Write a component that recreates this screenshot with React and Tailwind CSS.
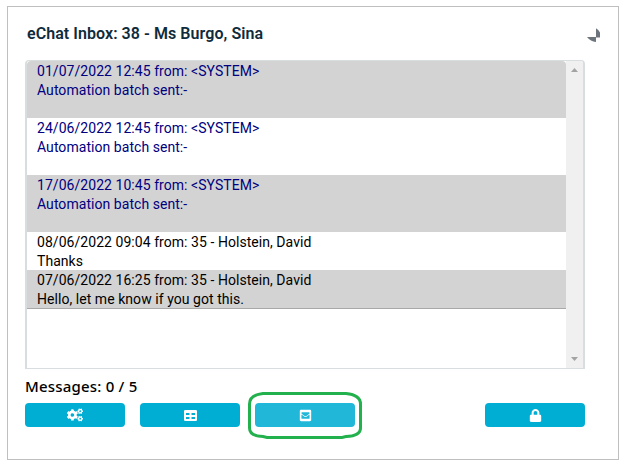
import { FaCogs, FaEnvelopeSquare, FaLock } from "react-icons/fa";

const messages = [
    { id: 1, date: "01/07/2022 12:45", from: "<SYSTEM>", body: "Automation batch sent:-", system: true },
    { id: 2, date: "24/06/2022 12:45", from: "<SYSTEM>", body: "Automation batch sent:-", system: true },
    { id: 3, date: "17/06/2022 10:45", from: "<SYSTEM>", body: "Automation batch sent:-", system: true },
    { id: 4, date: "08/06/2022 09:04", from: "35 - Holstein, David", body: "Thanks" },
    { id: 5, date: "07/06/2022 16:25", from: "35 - Holstein, David", body: "Hello, let me know if you got this." },
];

function Message({ message }) {
    return (
        <li
            className={`pt-px pl-2.5 text-[14px] leading-[19px] tracking-[0.05px] odd:bg-[#d3d3d3] ${
                message.system ? "h-[57px] text-[#000080]" : "h-[38px] text-black"
            }`}
        >
            <p>
                {message.date} from: {message.from}
            </p>
            <p>{message.body}</p>
        </li>
    );
}

function Scrollbar() {
    return (
        <div className="flex w-[17px] flex-col items-center justify-between bg-[#f0f0f0] py-[7px]">
            <svg className="h-1 w-[7px]" viewBox="0 0 7 4" fill="#a3a3a3">
                <path d="M3.5 0L7 4H0z" />
            </svg>
            <svg className="h-1 w-[7px]" viewBox="0 0 7 4" fill="#a3a3a3">
                <path d="M0 0h7L3.5 4z" />
            </svg>
        </div>
    );
}

function TableIcon() {
    return (
        <svg className="h-[11px] w-[13px]" viewBox="0 0 13 11" fill="currentColor" fillRule="evenodd">
            <path d="M1.2 0H11.8Q13 0 13 1.2V9.8Q13 11 11.8 11H1.2Q0 11 0 9.8V1.2Q0 0 1.2 0ZM2 3V5H5.5V3ZM7.5 3V5H11V3ZM2 7V9H5.5V7ZM7.5 7V9H11V7Z" />
        </svg>
    );
}

function ActionButton({ label, className = "bg-[#00aed4]", children }) {
    return (
        <button
            type="button"
            aria-label={label}
            className={`flex h-6 w-[100px] items-center justify-center rounded text-white ${className}`}
        >
            {children}
        </button>
    );
}

function App() {
    return (
        <div className="h-[467px] w-[623px] bg-white pt-1.5 pl-[7px] font-['Roboto',sans-serif]">
            <section className="h-[454px] w-[612px] border border-[#bfbfbf] pl-[17px]">
                <header className="flex h-[53px] w-[576px] items-start justify-between pl-0.5">
                    <h1 className="mt-[15px] text-[16px] leading-6 font-semibold tracking-[0.06px] text-[#0f2b3c]">
                        eChat Inbox: 38 - Ms Burgo, Sina
                    </h1>
                    <svg className="mt-[21px] mr-px h-[14px] w-[13px]" viewBox="0 0 13 14" fill="#6c757d">
                        <path d="M9 0.3Q11.5 1.5 13 4.5V9.5H9zM0 9H9V14Q3.5 13.5 0 9z" />
                    </svg>
                </header>

                <div className="flex h-[309px] w-[560px] overflow-hidden rounded-t border-x-2 border-y border-[#d8dde0]">
                    <div className="w-[539px] overflow-hidden rounded-t">
                        <ul className="border-b border-[#a9a9a9]">
                            {messages.map((message) => (
                                <Message key={message.id} message={message} />
                            ))}
                        </ul>
                    </div>
                    <Scrollbar />
                </div>

                <p className="mt-[7px] h-[27px] font-['Noto_Sans',sans-serif] text-[15px] leading-5 font-medium tracking-[0.2px] text-black">
                    Messages: 0 / 5
                </p>

                <footer className="flex w-[560px] gap-[15px]">
                    <ActionButton label="Settings">
                        <FaCogs size={16} />
                    </ActionButton>
                    <ActionButton label="Table">
                        <TableIcon />
                    </ActionButton>
                    <div className="relative">
                        <ActionButton label="Mail" className="bg-[#21b7d8]">
                            <FaEnvelopeSquare size={13} />
                        </ActionButton>
                        <svg
                            className="absolute -top-[11px] -left-[7px] h-[47px] w-[114px]"
                            viewBox="0 0 114 47"
                            fill="none"
                            stroke="#22b14c"
                            strokeWidth="3"
                        >
                            <path d="M15 1.5H98Q112.5 3 112.5 12V36Q112.5 44 98 44.5L94 45.5H19L15 44.5Q1.500 44 1.5 36V12Q1.5 3 15 1.5Z" />
                        </svg>
                    </div>
                    <div className="ml-auto">
                        <ActionButton label="Lock">
                            <FaLock size={13} />
                        </ActionButton>
                    </div>
                </footer>
            </section>
        </div>
    );
}

export default App;
